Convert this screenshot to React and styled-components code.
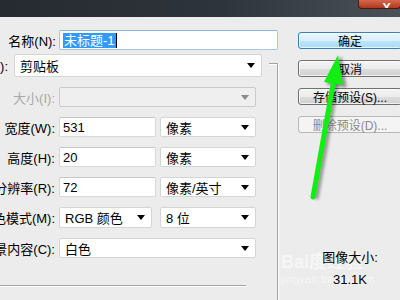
import React from "react";
import styled, { createGlobalStyle } from "styled-components";

const FONT = `"Liberation Sans", "Noto Sans CJK SC", sans-serif`;

const Global = createGlobalStyle`
  html, body { margin: 0; padding: 0; background: #ececec; }
  body { font-family: ${FONT}; }
`;

const Window = styled.div`
  position: relative;
  width: 400px;
  height: 300px;
  overflow: hidden;
  background: #ececec;
  display: flex;
  flex-direction: column;
  font-family: ${FONT};
  font-size: 13px;
  color: #000;
`;

const TitleBar = styled.div`
  height: 17px;
  flex-shrink: 0;
  background: linear-gradient(to right, #262b31 0%, #2e343b 55%, #4a5159 100%);
  display: flex;
  justify-content: flex-end;
  align-items: flex-start;
`;

const CloseBtn = styled.div`
  width: 43px;
  height: 9px;
  margin-right: -1px;
  box-sizing: border-box;
  background: linear-gradient(#d5684c, #b2371f);
  border: 1px solid #4a1a12;
  border-top: none;
  border-radius: 0 0 4px 4px;
  display: flex;
  justify-content: center;
  align-items: flex-end;
  overflow: hidden;
  color: #fff;
  font-weight: bold;
  font-size: 13px;
  line-height: 13px;
  & > span { margin-bottom: -6px; margin-left: 14px; }
`;

const Main = styled.div`
  flex: 1;
  display: flex;
`;

const LeftPane = styled.div`
  width: 278px;
  flex-shrink: 0;
  display: flex;
  flex-direction: column;
`;

const Group = styled.div`
  margin-top: 13px;
  flex: 1;
  border-top: 1px solid #a3a3a3;
  border-right: 1px solid #a3a3a3;
  box-shadow: 1px 0 0 #fff, inset 0 1px 0 #fff;
  display: flex;
  flex-direction: column;
  gap: 10px;
`;

const Row = styled.div`
  display: flex;
  align-items: center;
  height: ${(p) => p.$h || 20}px;
  margin-top: ${(p) => p.$mt || 0}px;
  ${(p) => (p.$legend ? "background:#ececec; width:269px; margin-top:-10px;" : "")}
`;

const Label = styled.div`
  width: ${(p) => p.$w ?? 55}px;
  margin-right: ${(p) => p.$gap ?? 4}px;
  flex-shrink: 0;
  display: flex;
  justify-content: flex-end;
  white-space: nowrap;
  color: ${(p) => (p.$disabled ? "#a8a8a8" : "#000")};
`;

const Input = styled.div`
  box-sizing: border-box;
  width: ${(p) => p.$w}px;
  height: 20px;
  background: #fff;
  border: 1px solid ${(p) => (p.$focus ? "#a6c6e6" : "#d6d8dc")};
  border-top-color: ${(p) => (p.$focus ? "#8fb3d9" : "#c4c6ca")};
  border-radius: 2px;
  display: flex;
  align-items: center;
  padding-left: 3px;
  white-space: nowrap;
`;

const Selected = styled.span`
  background: #3399ff;
  color: #fff;
  line-height: 15px;
  padding: 0 1px;
  border-right: 1px solid #000;
`;

const Select = styled.div`
  box-sizing: border-box;
  width: ${(p) => p.$w}px;
  height: ${(p) => p.$h || 20}px;
  margin-left: ${(p) => p.$ml || 0}px;
  background: ${(p) => (p.$disabled ? "#efefef" : "#fff")};
  border: 1px solid ${(p) => (p.$disabled ? "#cacaca" : "#d4d5d8")};
  border-radius: 2px;
  display: flex;
  align-items: center;
  justify-content: space-between;
  padding: 0 6px 0 5px;
  white-space: nowrap;
`;

const Arrow = styled.span`
  width: 0;
  height: 0;
  border-left: 4px solid transparent;
  border-right: 4px solid transparent;
  border-top: 5px solid ${(p) => (p.$disabled ? "#8a8a8a" : "#000")};
`;

const Separator = styled.div`
  width: 246px;
  height: 1px;
  margin-top: 17px;
  background: #a8a8a8;
  box-shadow: 0 1px 0 #fff;
`;

const RightPane = styled.div`
  flex: 1;
  display: flex;
  flex-direction: column;
  padding-left: 20px;
  padding-top: 15px;
  min-width: 0;
`;

const Button = styled.div`
  box-sizing: border-box;
  width: 104px;
  flex-shrink: 0;
  height: 17px;
  margin-bottom: 11px;
  border-radius: 3px;
  display: flex;
  align-items: center;
  justify-content: center;
  white-space: nowrap;
  font-size: 12px;
  border: 1px solid ${(p) => (p.$default ? "#3c7fb1" : p.$disabled ? "#b5b9bc" : "#707070")};
  color: ${(p) => (p.$disabled ? "#8a8a8a" : "#000")};
  background: ${(p) =>
    p.$default
      ? "linear-gradient(#e9f5fd 0%, #d9effc 50%, #bde5fb 51%, #a9daf6 100%)"
      : p.$disabled
      ? "#f4f4f4"
      : "linear-gradient(#f4f4f4 0%, #ececec 50%, #dedede 51%, #d0d0d0 100%)"};
  box-shadow: inset 0 0 0 1px ${(p) => (p.$disabled ? "transparent" : "rgba(255,255,255,0.7)")};
`;

const Info = styled.div`
  margin-top: auto;
  margin-bottom: 11px;
  width: 104px;
  display: flex;
  flex-direction: column;
  align-items: center;
  gap: 4px;
  line-height: 18px;
  position: relative;
  z-index: 1;
`;

const Watermark = styled.div`
  position: absolute;
  left: 281px;
  top: 247px;
  color: rgba(255, 255, 255, 0.55);
  font-family: "Liberation Sans", "Noto Sans CJK SC", sans-serif;
  pointer-events: none;
  & > b { font-size: 18px; }
  & > div { font-size: 11px; margin-top: 0px; letter-spacing: 0.3px; }
`;

const Overlay = styled.svg`
  position: absolute;
  left: 0;
  top: 0;
  pointer-events: none;
  z-index: 2;
`;

function FormRow({ label, disabled, children, h }) {
  return (
    <Row $h={h}>
      <Label $disabled={disabled}>{label}</Label>
      {children}
    </Row>
  );
}

export default function App() {
  return (
    <>
      <Global />
      <Window>
        <TitleBar>
          <CloseBtn>
            <span>X</span>
          </CloseBtn>
        </TitleBar>
        <Main>
          <LeftPane>
            <Row $mt={13}>
              <Label $w={56} $gap={3}>名称(N):</Label>
              <Input $w={223} $focus>
                <Selected>未标题-1</Selected>
              </Input>
            </Row>
            <Group>
              <Row $legend $h={23}>
                <Label $w={8} $gap={6}>预设(P):</Label>
                <Select $w={248} $h={23}>
                  <span>剪贴板</span>
                  <Arrow />
                </Select>
              </Row>
              <FormRow label="大小(I):" disabled>
                <Select $w={197} $disabled>
                  <span />
                  <Arrow $disabled />
                </Select>
              </FormRow>
              <FormRow label="宽度(W):">
                <Input $w={97}>531</Input>
                <Select $w={96} $ml={4}>
                  <span>像素</span>
                  <Arrow />
                </Select>
              </FormRow>
              <FormRow label="高度(H):">
                <Input $w={97}>20</Input>
                <Select $w={96} $ml={4}>
                  <span>像素</span>
                  <Arrow />
                </Select>
              </FormRow>
              <FormRow label="分辨率(R):">
                <Input $w={97}>72</Input>
                <Select $w={96} $ml={4}>
                  <span>像素/英寸</span>
                  <Arrow />
                </Select>
              </FormRow>
              <FormRow label="颜色模式(M):" h={21}>
                <Select $w={93} $h={21}>
                  <span>RGB 颜色</span>
                  <Arrow />
                </Select>
                <Select $w={96} $h={21} $ml={8}>
                  <span>8 位</span>
                  <Arrow />
                </Select>
              </FormRow>
              <FormRow label="背景内容(C):">
                <Select $w={197}>
                  <span>白色</span>
                  <Arrow />
                </Select>
              </FormRow>
              <Separator />
            </Group>
          </LeftPane>
          <RightPane>
            <Button $default>确定</Button>
            <Button>取消</Button>
            <Button>存储预设(S)...</Button>
            <Button $disabled>删除预设(D)...</Button>
            <Info>
              <span>图像大小:</span>
              <span>31.1K</span>
            </Info>
          </RightPane>
        </Main>
        <Watermark>
          <b>Bai度经验</b>
          <div>jingyan.baidu.com</div>
        </Watermark>
        <Overlay width="400" height="300" viewBox="0 0 400 300">
          <defs>
            <filter id="sh" x="-50%" y="-50%" width="200%" height="200%">
              <feGaussianBlur stdDeviation="1.5" />
            </filter>
          </defs>
          <g transform="translate(3,2)" fill="rgba(0,0,0,0.35)" stroke="rgba(0,0,0,0.35)" filter="url(#sh)">
            <line x1="313" y1="197" x2="333.5" y2="82" strokeWidth="5" />
            <polygon points="338,55 324,82 343,85" />
          </g>
          <line x1="313" y1="197" x2="333.5" y2="82" stroke="#11ee11" strokeWidth="5" strokeLinecap="round" />
          <polygon points="338,55 324,82 343,85" fill="#11ee11" />
        </Overlay>
      </Window>
    </>
  );
}
